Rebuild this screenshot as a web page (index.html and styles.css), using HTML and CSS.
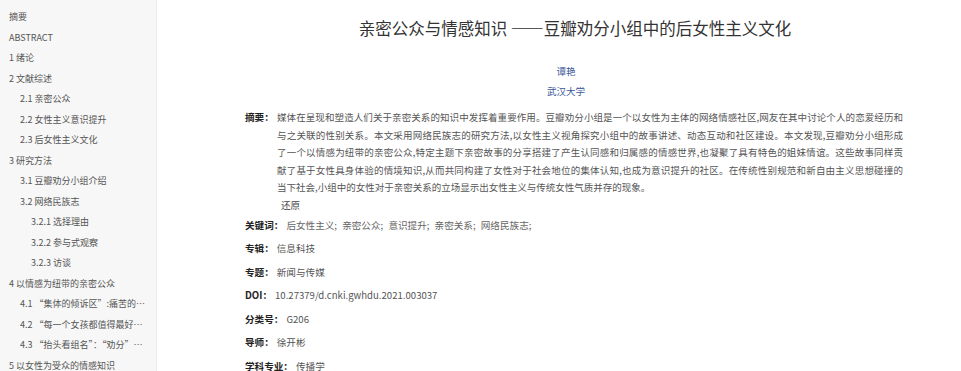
FILE: index.html
```html
<!DOCTYPE html>
<html lang="zh-CN">
<head>
    <meta charset="UTF-8">
    <meta name="viewport" content="width=device-width, initial-scale=1.0">
    <title>亲密公众与情感知识</title>
    <link rel="stylesheet" href="styles.css">
</head>
<body>
    <aside class="toc">
        <ul>
            <li class="lv1">摘要</li>
            <li class="lv1">ABSTRACT</li>
            <li class="lv1">1 绪论</li>
            <li class="lv1">2 文献综述</li>
            <li class="lv2">2.1 亲密公众</li>
            <li class="lv2">2.2 女性主义意识提升</li>
            <li class="lv2">2.3 后女性主义文化</li>
            <li class="lv1">3 研究方法</li>
            <li class="lv2">3.1 豆瓣劝分小组介绍</li>
            <li class="lv2">3.2 网络民族志</li>
            <li class="lv3">3.2.1 选择理由</li>
            <li class="lv3">3.2.2 参与式观察</li>
            <li class="lv3">3.2.3 访谈</li>
            <li class="lv1">4 以情感为纽带的亲密公众</li>
            <li class="lv2">4.1 “集体的倾诉区”:痛苦的经验与共鸣</li>
            <li class="lv2">4.2 “每一个女孩都值得最好的”</li>
            <li class="lv2">4.3 “抬头看组名”：“劝分”的逻辑</li>
            <li class="lv1">5 以女性为受众的情感知识</li>
            <li class="lv2">5.1 情感知识的生产</li>
            <li class="lv2">5.2 情感知识的传播</li>
            <li class="lv2">5.3 情感知识的接受</li>
            <li class="lv1">6 意识提升与后女性主义</li>
            <li class="lv2">6.1 女性意识的觉醒</li>
            <li class="lv2">6.2 后女性主义的表现</li>
            <li class="lv2">6.3 姐妹情谊的建构</li>
            <li class="lv1">7 结论与讨论</li>
            <li class="lv2">7.1 研究结论</li>
            <li class="lv2">7.2 研究不足</li>
            <li class="lv1">参考文献</li>
            <li class="lv1">附录</li>
            <li class="lv1">致谢</li>
            <li class="lv1">作者简介</li>
        </ul>
    </aside>

    <main class="content">
        <h1 class="title">亲密公众与情感知识 ——豆瓣劝分小组中的后女性主义文化</h1>

        <div class="author">
            <a href="#">谭艳</a>
            <a href="#">武汉大学</a>
        </div>

        <div class="abstract">
            <span class="label">摘要：</span>
            <div class="abstract-text">
                <p>
                    <span class="line">媒体在呈现和塑造人们关于亲密关系的知识中发挥着重要作用。豆瓣劝分小组是一个以女性为主体的网络情感社区,网友在其中讨论个人的恋爱经历和</span>
                    <span class="line">与之关联的性别关系。本文采用网络民族志的研究方法,以女性主义视角探究小组中的故事讲述、动态互动和社区建设。本文发现,豆瓣劝分小组形成</span>
                    <span class="line">了一个以情感为纽带的亲密公众,特定主题下亲密故事的分享搭建了产生认同感和归属感的情感世界,也凝聚了具有特色的姐妹情谊。这些故事同样贡</span>
                    <span class="line">献了基于女性具身体验的情境知识,从而共同构建了女性对于社会地位的集体认知,也成为意识提升的社区。在传统性别规范和新自由主义思想碰撞的</span>
                    <span class="line last">当下社会,小组中的女性对于亲密关系的立场显示出女性主义与传统女性气质并存的现象。</span>
                </p>
                <a class="restore" href="#">还原</a>
            </div>
        </div>

        <dl class="meta">
            <div class="row">
                <dt>关键词：</dt>
                <dd class="keywords">
                    <a href="#">后女性主义;</a>
                    <a href="#">亲密公众;</a>
                    <a href="#">意识提升;</a>
                    <a href="#">亲密关系;</a>
                    <a href="#">网络民族志;</a>
                </dd>
            </div>
            <div class="row">
                <dt>专辑：</dt>
                <dd>信息科技</dd>
            </div>
            <div class="row">
                <dt>专题：</dt>
                <dd>新闻与传媒</dd>
            </div>
            <div class="row">
                <dt>DOI：</dt>
                <dd>10.27379/d.cnki.gwhdu.2021.003037</dd>
            </div>
            <div class="row">
                <dt>分类号：</dt>
                <dd>G206</dd>
            </div>
            <div class="row">
                <dt>导师：</dt>
                <dd>徐开彬</dd>
            </div>
            <div class="row">
                <dt>学科专业：</dt>
                <dd>传播学</dd>
            </div>
        </dl>
    </main>
</body>
</html>
```

FILE: styles.css
```css
html, body {
    height: 100%;
}

body {
    margin: 0;
    display: flex;
    font-family: "Noto Sans CJK SC", "Noto Sans", sans-serif;
    color: #333;
    background-color: #fff;
    overflow: hidden;
}

a {
    text-decoration: none;
}

/* left table of contents */
.toc {
    flex: 0 0 157px;
    height: 100vh;
    overflow-y: scroll;
    background-color: #f7f7f7;
    border-right: 1px solid #ececec;
    box-sizing: border-box;
}

.toc::-webkit-scrollbar {
    width: 10px;
}

.toc::-webkit-scrollbar-track {
    background-color: #f7f7f7;
    margin: 7px 0;
}

.toc::-webkit-scrollbar-thumb {
    background-color: #cdcdcd;
    border-left: 3px solid transparent;
    border-right: 2px solid transparent;
    background-clip: padding-box;
}

.toc ul {
    list-style: none;
    margin: 0;
    padding: 7px 0 20px;
}

.toc li {
    font-size: 9px;
    line-height: 20.5px;
    height: 20.5px;
    color: #555;
    white-space: nowrap;
    overflow: hidden;
    text-overflow: ellipsis;
    padding-right: 8px;
}

.toc .lv1 { padding-left: 9px; }
.toc .lv2 { padding-left: 20px; }
.toc .lv3 { padding-left: 31px; }

/* article */
.content {
    flex: 1;
    padding: 16px 0 0 88px;
}

.title {
    width: 660px;
    margin: 0;
    font-size: 16.5px;
    font-weight: normal;
    line-height: 24px;
    text-align: center;
    color: #333;
}

.author {
    width: 660px;
    padding-right: 18px;
    box-sizing: border-box;
    margin-top: 21px;
    display: flex;
    flex-direction: column;
    align-items: center;
}

.author a {
    font-size: 9.5px;
    line-height: 20px;
    color: #3b5998;
}

.abstract {
    width: 660px;
    margin-top: 8px;
    display: flex;
    font-size: 9.5px;
    line-height: 17.6px;
}

.abstract .label {
    flex: 0 0 32px;
    font-weight: bold;
    font-size: 9.6px;
    color: #222;
}

.abstract-text p {
    margin: 0;
    color: #555;
    width: 626px;
}

/* justified lines like the original reader */
.abstract-text .line {
    display: block;
    white-space: nowrap;
    text-align: justify;
    text-align-last: justify;
}

.abstract-text .line.last {
    text-align-last: left;
}

.restore {
    display: block;
    padding-left: 4px;
    color: #444;
    line-height: 17px;
}

.meta {
    margin: 0;
    font-size: 9.6px;
}

.meta .row {
    display: flex;
    align-items: baseline;
    height: 23.5px;
    line-height: 23.5px;
}

.meta dt {
    font-weight: bold;
    color: #222;
    margin-right: 3px;
}

.meta dd {
    margin: 0;
    color: #555;
}

.keywords a {
    color: #666;
    margin-right: 3px;
}
```
